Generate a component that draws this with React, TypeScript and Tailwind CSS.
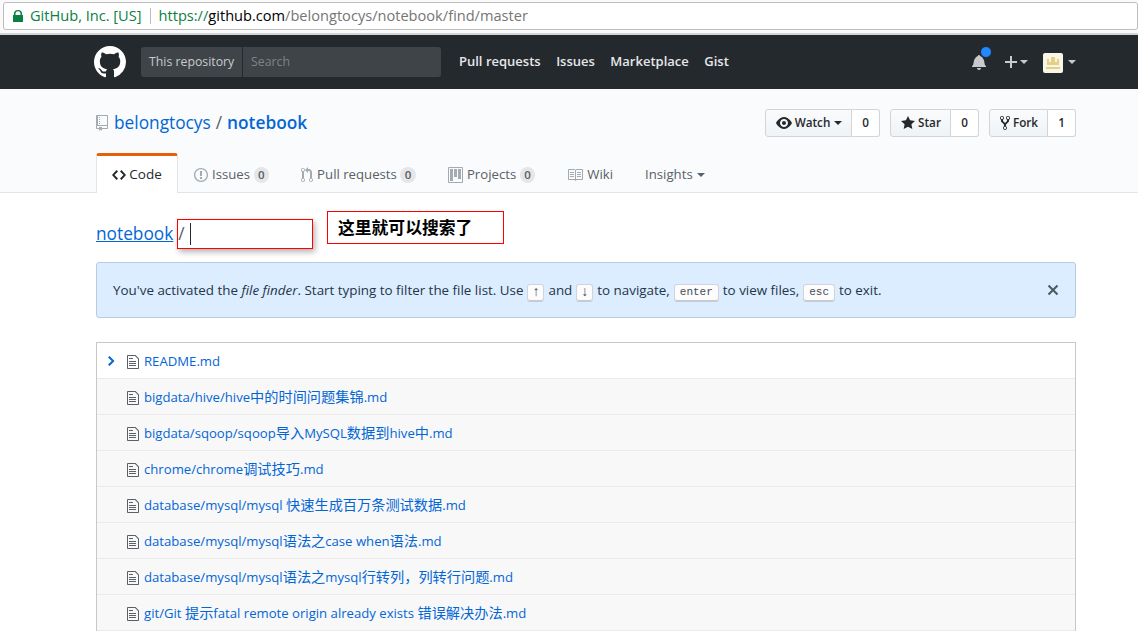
const FONT = "font-['Open_Sans','Noto_Sans_CJK_SC',sans-serif]";

const paths = {
  mark: 'M8 0C3.58 0 0 3.58 0 8c0 3.54 2.29 6.53 5.47 7.59.4.07.55-.17.55-.38 0-.19-.01-.82-.01-1.49-2.01.37-2.53-.49-2.69-.94-.09-.23-.48-.94-.82-1.13-.28-.15-.68-.52-.01-.53.63-.01 1.08.58 1.23.82.72 1.21 1.87.87 2.33.66.07-.52.28-.87.51-1.07-1.78-.2-3.64-.89-3.64-3.95 0-.87.31-1.59.82-2.15-.08-.2-.36-1.02.08-2.12 0 0 .67-.21 2.2.82.64-.18 1.32-.27 2-.27.68 0 1.36.09 2 .27 1.53-1.04 2.2-.82 2.2-.82.44 1.1.16 1.92.08 2.12.51.56.82 1.27.82 2.15 0 3.07-1.87 3.75-3.65 3.95.29.25.54.73.54 1.48 0 1.07-.01 1.93-.01 2.2 0 .21.15.46.55.38A8.013 8.013 0 0016 8c0-4.42-3.58-8-8-8z',
  repo: 'M4 9H3V8h1v1zm0-3H3v1h1V6zm0-2H3v1h1V4zm0-2H3v1h1V2zm8-1v12c0 .55-.45 1-1 1H6v2l-1.5-1.5L3 16v-2H1c-.55 0-1-.45-1-1V1c0-.55.45-1 1-1h10c.55 0 1 .45 1 1zm-1 10H1v2h2v-1h3v1h5v-2zm0-10H2v9h9V1z',
  eye: 'M8.06 2C3 2 0 8 0 8s3 6 8.06 6C13 14 16 8 16 8s-3-6-7.94-6zM8 12c-2.2 0-4-1.78-4-4 0-2.2 1.8-4 4-4 2.22 0 4 1.8 4 4 0 2.22-1.78 4-4 4zm2-4c0 1.11-.89 2-2 2-1.11 0-2-.89-2-2 0-1.11.89-2 2-2 1.11 0 2 .89 2 2z',
  star: 'M14 6l-4.9-.64L7 1 4.9 5.36 0 6l3.6 3.26L2.67 14 7 11.67 11.33 14l-.93-4.74L14 6z',
  fork: 'M8 1a1.993 1.993 0 0 0-1 3.72V6L5 8 3 6V4.72A1.993 1.993 0 0 0 2 1a1.993 1.993 0 0 0-1 3.72V6.5l3 3v1.78A1.993 1.993 0 0 0 5 15a1.993 1.993 0 0 0 1-3.72V9.5l3-3V4.72A1.993 1.993 0 0 0 8 1zM2 4.2C1.34 4.2.8 3.65.8 3c0-.65.55-1.2 1.2-1.2.65 0 1.2.55 1.2 1.2 0 .65-.55 1.2-1.2 1.2zm3 10c-.66 0-1.2-.55-1.2-1.2 0-.65.55-1.2 1.2-1.2.65 0 1.2.55 1.2 1.2 0 .65-.55 1.2-1.2 1.2zm3-10c-.66 0-1.2-.55-1.2-1.2 0-.65.55-1.2 1.2-1.2.65 0 1.2.55 1.2 1.2 0 .65-.55 1.2-1.2 1.2z',
  code: 'M9.5 3L8 4.5 11.5 8 8 11.5 9.5 13 14 8 9.5 3zm-5 0L0 8l4.5 5L6 11.5 2.5 8 6 4.5 4.5 3z',
  issue: 'M7 2.3c3.14 0 5.7 2.56 5.7 5.7s-2.56 5.7-5.7 5.7A5.71 5.71 0 0 1 1.3 8c0-3.14 2.56-5.7 5.7-5.7zM7 1C3.14 1 0 4.14 0 8s3.14 7 7 7 7-3.14 7-7-3.14-7-7-7zm1 3H6v5h2V4zm0 6H6v2h2v-2z',
  pr: 'M11 11.28V5c-.03-.78-.34-1.47-.94-2.06C9.46 2.35 8.78 2.03 8 2H7V0L4 3l3 3V4h1c.27.02.48.11.69.31.21.2.3.42.31.69v6.28A1.993 1.993 0 0 0 10 15a1.993 1.993 0 0 0 1-3.72zm-1 2.92c-.66 0-1.2-.55-1.2-1.2 0-.65.55-1.2 1.2-1.2.65 0 1.2.55 1.2 1.2 0 .65-.55 1.2-1.2 1.2zM4 3c0-1.11-.89-2-2-2a1.993 1.993 0 0 0-1 3.72v6.56A1.993 1.993 0 0 0 2 15a1.993 1.993 0 0 0 1-3.72V4.72c.59-.34 1-.98 1-1.72zm-.8 10c0 .66-.55 1.2-1.2 1.2-.65 0-1.2-.55-1.2-1.2 0-.65.55-1.2 1.2-1.2.65 0 1.2.55 1.2 1.2zM2 4.2C1.34 4.2.8 3.65.8 3c0-.65.55-1.2 1.2-1.2.65 0 1.2.55 1.2 1.2 0 .65-.55 1.2-1.2 1.2z',
  project: 'M10 12h3V2h-3v10zm-4-2h3V2H6v8zm-4 4h3V2H2v12zm-1 1h13V1H1v14zM14 0H1a1 1 0 0 0-1 1v14a1 1 0 0 0 1 1h13a1 1 0 0 0 1-1V1a1 1 0 0 0-1-1z',
  book: 'M3 5h4v1H3V5zm0 3h4V7H3v1zm0 2h4V9H3v1zm11-5h-4v1h4V5zm0 2h-4v1h4V7zm0 2h-4v1h4V9zm2-6v9c0 .55-.45 1-1 1H9.5l-1 1-1-1H2c-.55 0-1-.45-1-1V3c0-.55.45-1 1-1h5.5l1 1 1-1H15c.55 0 1 .45 1 1zm-8 .5L7.5 3H2v9h6V3.5zm7-.5H9.5l-.5.5V12h6V3z',
  file: 'M6 5H2V4h4v1zM2 8h7V7H2v1zm0 2h7V9H2v1zm0 2h7v-1H2v1zm10-7.5V14c0 .55-.45 1-1 1H1c-.55 0-1-.45-1-1V2c0-.55.45-1 1-1h7.5L12 4.5zM11 5L8 2H1v12h10V5z',
  bell: 'M14 12v1H0v-1l.73-.58c.77-.77.81-2.55 1.19-4.42C2.69 3.23 6 2 6 2c0-.55.45-1 1-1s1 .45 1 1c0 0 3.39 1.23 4.16 5 .38 1.88.42 3.66 1.19 4.42l.66.58H14zm-7 4c1.11 0 2-.89 2-2H5c0 1.11.89 2 2 2z',
  chevron: 'M7.5 8l-5 5L1 11.5 4.75 8 1 4.5 2.5 3l5 5z',
  x: 'M7.48 8l3.75 3.75-1.48 1.48L6 9.48l-3.75 3.75-1.48-1.48L4.52 8 .77 4.25l1.48-1.48L6 6.52l3.75-3.75 1.48 1.48L7.48 8z',
  plus: 'M12 9H7v5H5V9H0V7h5V2h2v5h5v2z',
};

function Oct({ d, vw, className }: { d: string; vw: number; className: string }) {
  return (
    <svg viewBox={`0 0 ${vw} 16`} className={className} fill="currentColor">
      <path fillRule="evenodd" d={d} />
    </svg>
  );
}

function Caret({ className }: { className: string }) {
  return <span className={`inline-block w-0 h-0 border-x-4 border-x-transparent border-t-4 ${className}`} />;
}

function Kbd({ children, arrow }: { children: React.ReactNode; arrow?: boolean }) {
  return (
    <span className={`inline-flex items-center justify-center h-[18px] mt-[4px] mx-[1px] bg-[#fcfcfc] border border-[#d1d5da] border-b-[#c6cbd1] rounded-[3px] shadow-[inset_0_-1px_0_#c6cbd1] text-[#444d56] font-['Liberation_Mono',monospace] ${arrow ? 'w-[17px] text-[14px]' : 'px-[5px] text-[11px]'}`}>
      {children}
    </span>
  );
}

function RepoButton({ icon, vw, label, count, caret, btnW, iconClass }: { icon: string; vw: number; label: string; count: string; caret?: boolean; btnW: string; iconClass: string }) {
  return (
    <div className="flex h-[28px] text-[11.7px] font-semibold text-[#24292e]">
      <div className={`flex items-center justify-center gap-[3px] ${btnW} pl-[1px] bg-gradient-to-b from-[#fafbfc] to-[#eff3f6] border border-[#d1d5da] rounded-l-[3px]`}>
        <Oct d={icon} vw={vw} className={iconClass} />
        <span>{label}</span>
        {caret && <Caret className="border-t-[#24292e] ml-[1px]" />}
      </div>
      <div className="flex items-center justify-center w-[28px] bg-white border border-l-0 border-[#d1d5da] rounded-r-[3px]">{count}</div>
    </div>
  );
}

function Tab({ icon, vw, label, count, iconClass }: { icon: string; vw: number; label: string; count?: string; iconClass: string }) {
  return (
    <div className="flex items-center h-[39px] pt-[4px] px-[16px] text-[13.2px] text-[#586069]">
      <Oct d={icon} vw={vw} className={`${iconClass} text-[#a3aab1] mr-[4px]`} />
      <span>{label}</span>
      {count && <span className="ml-[3.5px] h-[16px] px-[4.5px] rounded-full bg-[#e4e6e8] text-[11.5px] leading-[16px] font-semibold text-[#586069]">{count}</span>}
    </div>
  );
}

const FILES = [
  'README.md',
  'bigdata/hive/hive中的时间问题集锦.md',
  'bigdata/sqoop/sqoop导入MySQL数据到hive中.md',
  'chrome/chrome调试技巧.md',
  'database/mysql/mysql 快速生成百万条测试数据.md',
  'database/mysql/mysql语法之case when语法.md',
  'database/mysql/mysql语法之mysql行转列，列转行问题.md',
  'git/Git 提示fatal remote origin already exists 错误解决办法.md',
];

// the chinese runs sit a bit larger than the latin ones
function FileName({ name }: { name: string }) {
  const parts = name.split(/([\u4e00-\u9fff，]+)/);
  return (
    <span className="block h-[20px] ml-[5px] overflow-hidden text-[13.15px] leading-[20px] text-[#0366d6]">
      {parts.map((p, i) => (i % 2 === 1 ? <span key={i} className="text-[14.2px] leading-none">{p}</span> : p))}
    </span>
  );
}

export default function App() {
  return (
    <div className={`relative h-[631px] overflow-hidden bg-white ${FONT}`}>
      {/* browser address bar */}
      <div className="h-[35px] bg-[#fafafa] pt-[2px] pl-[3px] border-b-2 border-[#d4d4d4]">
        <div className="flex items-center h-[28px] pl-[9px] bg-white border border-[#bdbdbd] rounded-[3px] text-[14.6px]">
          <svg viewBox="0 0 10 12" className="w-[10px] h-[12px] text-[#0b8043]" fill="currentColor">
            <path d="M1 5V3.5a4 3.5 0 0 1 8 0V5h1v7H0V5h1zm1.5 0h5V3.5a2.5 2.2 0 0 0-5 0V5z" />
          </svg>
          <span className="ml-[7px] text-[#0b8043]">GitHub, Inc. [US]</span>
          <span className="ml-[8px] mr-[8px] w-px h-[16px] bg-[#bdbdbd]" />
          <span className="text-[#757575]">
            <span className="text-[#0b8043]">https://</span>
            <span className="text-black">github.com</span>/belongtocys/notebook/find/master
          </span>
        </div>
      </div>

      {/* site header */}
      <div className="flex items-center h-[54px] bg-[#24292e] pl-[94px]">
        <Oct d={paths.mark} vw={16} className="w-[32px] h-[32px] text-white" />
        <div className="flex ml-[15px] w-[300px] h-[30px] bg-[#3f4448] rounded-[3px] text-[12.3px]">
          <div className="flex items-center w-[102px] pl-[8px] border-r border-[#24292e] text-[#c8cacc]">This repository</div>
          <div className="flex items-center pl-[8px] text-[#7f8386]">Search</div>
        </div>
        <div className="flex gap-[15.5px] ml-[18px] text-[13px] font-semibold text-[#e6e7e8]">
          <span>Pull requests</span>
          <span>Issues</span>
          <span>Marketplace</span>
          <span>Gist</span>
        </div>
        <div className="relative ml-[243px] w-[16px] h-[16px]">
          <Oct d={paths.bell} vw={14} className="w-[14px] h-[16px] text-[#c8cacc]" />
          <span className="absolute -top-[8px] left-[8px] w-[12px] h-[12px] rounded-full bg-[#2188ff] border border-[#24292e]" />
        </div>
        <Oct d={paths.plus} vw={12} className="ml-[17px] w-[12px] h-[16px] text-[#c8cacc]" />
        <Caret className="ml-[3px] border-t-[#c8cacc]" />
        <div className="flex items-end justify-center ml-[15px] w-[20px] h-[20px] mt-[1px] rounded-[2px] bg-[#faf6e6] pb-[2px]">
          <svg viewBox="0 0 16 16" className="w-[16px] h-[16px]" fill="#e3cf85">
            <path d="M2 4h2v3h2V2h4v5h2V4h2v6H2zM1 12h14v2H1z" />
          </svg>
        </div>
        <Caret className="ml-[5px] border-t-[#c8cacc]" />
      </div>

      {/* repo head */}
      <div className="h-[104px] bg-[#fafbfc] border-b border-[#e1e4e8]">
        <div className="flex items-center justify-between w-[980px] ml-[96px] pt-[15px] h-[53px]">
          <div className="flex items-center text-[17.3px] text-[#586069]">
            <Oct d={paths.repo} vw={12} className="w-[12px] h-[16px] text-[#a3aab1] mr-[6px]" />
            <span className="text-[#0366d6]">belongtocys</span>
            <span className="mx-[5px]">/</span>
            <span className="text-[#0366d6] font-semibold">notebook</span>
          </div>
          <div className="flex gap-[10px]">
            <RepoButton icon={paths.eye} vw={16} label="Watch" count="0" caret btnW="w-[87px]" iconClass="w-[16px] h-[16px]" />
            <RepoButton icon={paths.star} vw={14} label="Star" count="0" btnW="w-[61px]" iconClass="w-[14px] h-[16px]" />
            <RepoButton icon={paths.fork} vw={10} label="Fork" count="1" btnW="w-[59px]" iconClass="w-[10px] h-[16px]" />
          </div>
        </div>
        <div className="flex items-end w-[980px] ml-[96px] mt-[11px]">
          <div className="flex items-center h-[40px] w-[82px] justify-center -mb-px bg-white border-x border-[#e1e4e8] border-t-[3px] border-t-[#e36209] rounded-t-[3px] text-[13.5px] text-[#24292e]">
            <Oct d={paths.code} vw={14} className="w-[14px] h-[16px] mr-[3px]" />
            Code
          </div>
          <Tab icon={paths.issue} vw={14} label="Issues" count="0" iconClass="w-[14px] h-[16px]" />
          <Tab icon={paths.pr} vw={12} label="Pull requests" count="0" iconClass="w-[12px] h-[16px]" />
          <Tab icon={paths.project} vw={15} label="Projects" count="0" iconClass="w-[15px] h-[16px]" />
          <Tab icon={paths.book} vw={16} label="Wiki" iconClass="w-[16px] h-[16px]" />
          <div className="flex items-center h-[39px] pt-[4px] px-[16px] text-[13.2px] text-[#586069]">
            Insights
            <Caret className="ml-[4px] border-t-[#586069]" />
          </div>
        </div>
      </div>

      {/* finder breadcrumb */}
      <div className="w-[980px] ml-[96px]">
        <div className="flex items-center h-[30px] mt-[26px] text-[17.3px]">
          <span className="text-[#0366d6] underline -mt-[1px]">notebook</span>
          <div className="flex items-center ml-[4px] w-[136px] h-[30px] border-[1.5px] border-[#f00] shadow-[2px_3px_6px_rgba(0,0,0,0.3)] text-[#586069]">
            <span>/</span>
            <span className="ml-[5px] w-px h-[22px] bg-[#24292e]" />
          </div>
        </div>

        {/* flash */}
        <div className="flex items-center justify-between h-[56px] mt-[13px] pl-[16px] pr-[16px] bg-[#dbedff] border border-[#b5cde3] rounded-[3px] text-[13.4px] text-[#24354a]">
          <div className="flex items-center gap-[3px] pt-[1px]">
            <span>You've activated the <em>file finder</em>. Start typing to filter the file list. Use</span>
            <Kbd arrow>↑</Kbd>
            <span>and</span>
            <Kbd arrow>↓</Kbd>
            <span>to navigate,</span>
            <Kbd>enter</Kbd>
            <span>to view files,</span>
            <Kbd>esc</Kbd>
            <span>to exit.</span>
          </div>
          <Oct d={paths.x} vw={12} className="w-[12px] h-[16px] text-[#4e5a66]" />
        </div>

        {/* file list */}
        <div className="mt-[24px] border border-[#c8c8c8] border-b-0">
          {FILES.map((f, i) => (
            <div key={f} className={`flex items-center h-[36px] border-b border-[#eaeaea] ${i === 0 ? 'bg-white' : 'bg-[#f8f8f8]'}`}>
              <div className="flex justify-center w-[30px] pr-[2px]">
                {i === 0 && <Oct d={paths.chevron} vw={8} className="w-[8px] h-[16px] text-[#0366d6]" />}
              </div>
              <Oct d={paths.file} vw={12} className="w-[12px] h-[16px] mt-[2px] text-[#586069]" />
              <FileName name={f} />
            </div>
          ))}
        </div>
      </div>

      {/* annotation pasted over the screenshot */}
      <div className="absolute left-[327px] top-[211px] flex items-center w-[177px] h-[33px] pl-[10px] bg-white border border-[#f00] text-[16.8px] font-bold text-black font-['Noto_Sans_CJK_SC',sans-serif]">
        这里就可以搜索了
      </div>
    </div>
  );
}
